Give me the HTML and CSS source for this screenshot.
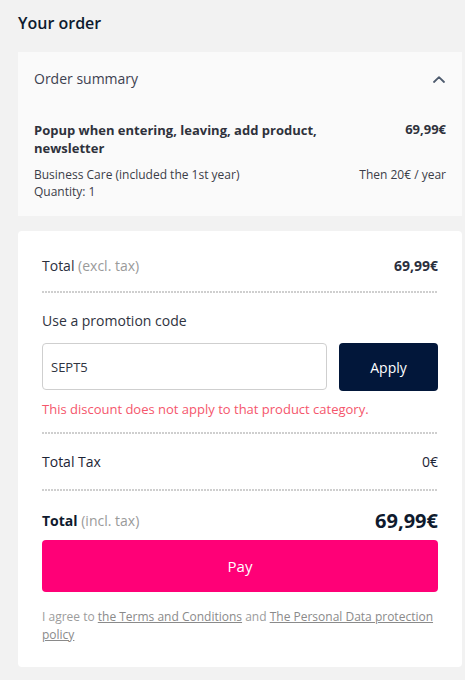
FILE: index.html
```html
<!DOCTYPE html>
<html lang="en">
<head>
<meta charset="utf-8">
<title>Your order</title>
<link rel="stylesheet" href="styles.css">
</head>
<body>
<main class="page">
  <h1 class="page-title">Your order</h1>

  <section class="summary-card">
    <div class="summary-head">
      <span class="summary-title">Order summary</span>
      <svg class="chevron" width="12" height="7" viewBox="0 0 12 7" aria-hidden="true">
        <path d="M1 6 L6 1.2 L11 6" fill="none" stroke="#4e5b6e" stroke-width="1.8" stroke-linecap="round" stroke-linejoin="round"/>
      </svg>
    </div>
    <div class="product">
      <div class="product-name">Popup when entering, leaving, add product, newsletter</div>
      <div class="product-price">69,99€</div>
    </div>
    <div class="meta">
      <div class="meta-row"><span>Business Care (included the 1st year)</span><span>Then 20€ / year</span></div>
      <div class="meta-row"><span>Quantity: 1</span></div>
    </div>
  </section>

  <section class="checkout-card">
    <div class="row">
      <span>Total <span class="muted">(excl. tax)</span></span>
      <span class="amount-sm">69,99€</span>
    </div>
    <div class="sep sep-1"></div>
    <div class="promo-label">Use a promotion code</div>
    <div class="promo-form">
      <input class="promo-input" type="text" value="SEPT5">
      <button class="apply-btn" type="button">Apply</button>
    </div>
    <div class="promo-error">This discount does not apply to that product category.</div>
    <div class="sep sep-2"></div>
    <div class="row row-tax">
      <span>Total Tax</span>
      <span>0€</span>
    </div>
    <div class="sep sep-3"></div>
    <div class="row row-total">
      <span><strong>Total</strong> <span class="muted">(incl. tax)</span></span>
      <span class="amount-lg">69,99€</span>
    </div>
    <button class="pay-btn" type="button">Pay</button>
    <p class="terms">I agree to <a href="#">the Terms and Conditions</a> and <a href="#">The Personal Data protection policy</a></p>
  </section>
</main>
</body>
</html>
```
FILE: styles.css
```css
* { box-sizing: border-box; }

html, body {
  margin: 0;
  background: #f2f2f2;
}

body {
  font-family: "Open Sans", "Liberation Sans", sans-serif;
  color: #2e3140;
}

.page {
  padding: 12px 3px 12px 18px;
}

.page-title {
  margin: 0 0 18px;
  font-size: 16px;
  line-height: 22px;
  font-weight: 600;
  color: #0d1b2e;
}

/* Summary card */
.summary-card {
  background: #fafafa;
  padding: 16px 16px 16px;
}

.summary-head {
  display: flex;
  justify-content: space-between;
  align-items: center;
  height: 22px;
}

.summary-title {
  font-size: 14px;
  line-height: 22px;
  color: #3d4150;
}

.chevron {
  display: block;
  margin-right: 1px;
}

.product {
  margin-top: 31px;
  display: flex;
  justify-content: space-between;
  align-items: flex-start;
  gap: 16px;
}

.product-name {
  max-width: 300px;
  font-size: 13px;
  line-height: 18px;
  font-weight: 700;
  color: #2f323c;
}

.product-price {
  font-size: 13px;
  line-height: 16px;
  font-weight: 700;
  color: #2f323c;
  white-space: nowrap;
}

.meta {
  margin-top: 9px;
  font-size: 12px;
  line-height: 17px;
  color: #3a3d48;
}

.meta-row {
  display: flex;
  justify-content: space-between;
}

/* Checkout card */
.checkout-card {
  margin-top: 15px;
  background: #ffffff;
  border-radius: 4px;
  padding: 24px 24px 23px;
}

.row {
  display: flex;
  justify-content: space-between;
  align-items: center;
  font-size: 14px;
  line-height: 22px;
  color: #2b2f3d;
}

.muted {
  color: #9a9a9a;
}

.amount-sm {
  font-size: 14px;
  font-weight: 700;
  color: #2b2f3d;
}

.sep {
  height: 2px;
  background-image: repeating-linear-gradient(to right, #cfcfcf 0 2px, transparent 2px 3px);
}

.sep-1 { margin-top: 14px; }
.sep-2 { margin-top: 14px; }
.sep-3 { margin-top: 16px; }

.promo-label {
  margin-top: 17px;
  font-size: 14px;
  line-height: 22px;
  color: #2f3340;
}

.promo-form {
  margin-top: 11px;
  display: flex;
  gap: 12px;
}

.promo-input {
  flex: 1;
  min-width: 0;
  height: 47px;
  margin: 0;
  padding: 0 8px;
  border: 1px solid #cfcfcf;
  border-radius: 4px;
  background: #fff;
  font-family: inherit;
  font-size: 13px;
  color: #2f3340;
  outline: none;
}

.apply-btn {
  width: 99px;
  height: 48px;
  margin: 0;
  border: 0;
  border-radius: 4px;
  background: #02173a;
  color: #ffffff;
  font-family: inherit;
  font-size: 14px;
}

.promo-error {
  margin-top: 9px;
  font-size: 13px;
  line-height: 18px;
  color: #f5566c;
}

.row-tax {
  margin-top: 17px;
  color: #1c2436;
}

.row-total {
  margin-top: 16px;
  line-height: 28px;
}

.row-total strong {
  font-weight: 700;
  color: #0f1a2e;
}

.amount-lg {
  font-size: 20px;
  font-weight: 700;
  color: #0f1a2e;
}

.pay-btn {
  display: block;
  width: 100%;
  height: 52px;
  margin: 5px 0 0;
  border: 0;
  border-radius: 4px;
  background: #ff0077;
  color: #ffffff;
  font-family: inherit;
  font-size: 15px;
}

.terms {
  margin: 16px 0 0;
  font-size: 12px;
  line-height: 18px;
  color: #9c9c9c;
}

.terms a {
  color: #8a8a8a;
  text-decoration: underline;
}
```
